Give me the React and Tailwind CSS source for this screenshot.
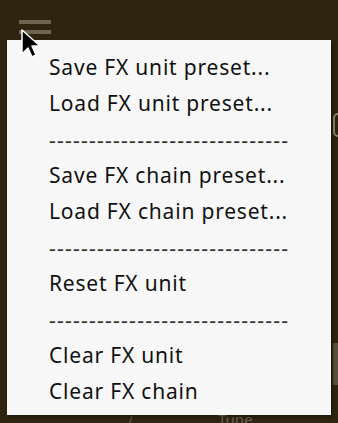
export default function App() {
  const items = [
    "Save FX unit preset...",
    "Load FX unit preset...",
    "-",
    "Save FX chain preset...",
    "Load FX chain preset...",
    "-",
    "Reset FX unit",
    "-",
    "Clear FX unit",
    "Clear FX chain",
  ];
  return (
    <div className="relative w-[338px] h-[423px] overflow-hidden bg-[#2e2410]" style={{ fontFamily: '"Noto Sans", sans-serif' }}>
      {/* hamburger */}
      <div className="absolute left-[19px] top-[20px] flex flex-col gap-[6px]">
        <div className="w-[32px] h-[4px] bg-[#6e6452]" />
        <div className="w-[32px] h-[4px] bg-[#6e6452]" />
      </div>
      {/* right-edge bits of background */}
      <div className="absolute left-[333px] top-[113px] w-[10px] h-[24px] rounded-full border-2 border-[#8a8170]" />
      <div className="absolute left-[333px] top-[343px] w-[10px] h-[42px] bg-[#5a5040]" />
      <div className="absolute left-[218px] top-[412px] text-[15px] leading-none text-[#6a6050]">Tune</div>
      <div className="absolute left-[128px] top-[414px] text-[13px] leading-none text-[#6a6050]">/</div>
      {/* menu */}
      <div className="absolute left-[7px] top-[40px] w-[324px] h-[375px] bg-[#f7f7f7] pt-[10px] shadow-[2px_2px_3px_rgba(0,0,0,0.35)] flex flex-col">
        {items.map((t, i) =>
          t === "-" ? (
            <div key={i} className="h-[36px] flex items-center pl-[42px]">
              <span className="text-[21px] leading-none text-[#333] tracking-[1.25px]">------------------------------</span>
            </div>
          ) : (
            <div key={i} className="h-[36px] flex items-center pl-[42px] text-[21px] text-[#111] tracking-[0.8px]">
              {t}
            </div>
          )
        )}
      </div>
      {/* cursor */}
      <svg className="absolute left-[20px] top-[28px]" width="22" height="32" viewBox="0 0 22 32">
        <path d="M2 2 L2 26 L8 20 L12 29 L16 27 L12 18 L20 18 Z" fill="#000" stroke="#fff" strokeWidth="1.5" strokeLinejoin="round" />
      </svg>
    </div>
  );
}
